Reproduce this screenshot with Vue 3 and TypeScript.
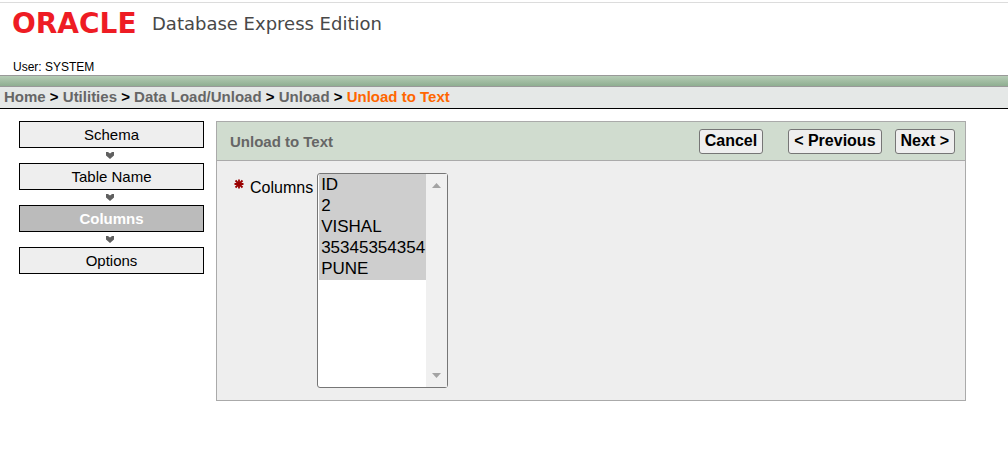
<script setup lang="ts">
import { ref } from 'vue'

const trail = ['Home', 'Utilities', 'Data Load/Unload', 'Unload']
const steps = ['Schema', 'Table Name', 'Columns', 'Options']
const current = 'Columns'
const columns = ['ID', '2', 'VISHAL', '35345354354', 'PUNE']
const selected = ref<string[]>([...columns])
</script>

<template>
  <div class="page">
    <header class="header">
      <div class="brand">
        <span class="logo">ORACLE</span>
        <span class="product">Database Express Edition</span>
      </div>
      <div class="user">User: SYSTEM</div>
    </header>
    <div class="band"></div>
    <nav class="crumbs" aria-label="Breadcrumb">
      <template v-for="item in trail" :key="item">
        <a href="#">{{ item }}</a>
        <span> &gt; </span>
      </template>
      <span class="here" aria-current="page">Unload to Text</span>
    </nav>

    <main class="main">
      <ol class="steps">
        <li v-for="(step, i) in steps" :key="step">
          <svg v-if="i > 0" class="arrow" width="8" height="7" viewBox="0 0 8 7" aria-hidden="true">
            <path d="M0 0h2l2 1.5L6 0h2v3.5L4 7 0 3.5z" fill="#606060" />
          </svg>
          <div class="step" :class="{ active: step === current }">{{ step }}</div>
        </li>
      </ol>

      <section class="panel">
        <div class="panel-head">
          <h1>Unload to Text</h1>
          <div class="actions">
            <button type="button" class="cancel">Cancel</button>
            <button type="button">&lt; Previous</button>
            <button type="button">Next &gt;</button>
          </div>
        </div>
        <div class="panel-body">
          <svg class="required" width="10" height="10" viewBox="0 0 10 10" aria-hidden="true">
            <path d="M5 0.5v9M0.5 5h9M1.5 1.5l7 7M8.5 1.5l-7 7" stroke="#990000" stroke-width="1.8" />
          </svg>
          <label for="columns">Columns</label>
          <div class="list">
            <select id="columns" v-model="selected" multiple>
              <option v-for="c in columns" :key="c" :value="c">{{ c }}</option>
            </select>
            <div class="scrollbar" aria-hidden="true">
              <svg width="9" height="5" viewBox="0 0 9 5"><path d="M4.5 0L9 5H0z" fill="#a3a3a3" /></svg>
              <svg width="9" height="5" viewBox="0 0 9 5"><path d="M0 0h9L4.5 5z" fill="#a3a3a3" /></svg>
            </div>
          </div>
        </div>
      </section>
    </main>
  </div>
</template>

<style>
body {
  margin: 0;
  background: #fff;
}
</style>

<style scoped>
.page {
  margin-top: 2px;
  border-top: 1px solid #dcdcdc;
  font-family: "Liberation Sans", Arial, sans-serif;
  color: #000;
}
.header {
  height: 72px;
  box-sizing: border-box;
  padding: 6px 12px 0;
}
.brand {
  display: flex;
  align-items: center;
  height: 30px;
}
.logo {
  width: 140px;
  font: bold 28px/30px "DejaVu Sans", sans-serif;
  color: #ee1c24;
}
.product {
  font: 18px/32px "DejaVu Sans", sans-serif;
  color: #484848;
}
.user {
  margin-top: 20px;
  font-size: 12px;
  line-height: 16px;
  padding-left: 1px;
}
.band {
  height: 10px;
  border-top: 1px solid #999;
  border-bottom: 1px solid #999;
  background: linear-gradient(#b5ccb5, #8fae91);
}
.crumbs {
  padding: 0 4px 2px;
  border-bottom: 1px solid #000;
  background: #e5e8e7;
  font-size: 15px;
  font-weight: bold;
  line-height: 19px;
}
.crumbs a {
  color: #666;
  text-decoration: none;
}
.crumbs .here {
  color: #ff6600;
}
.main {
  display: flex;
  align-items: flex-start;
  gap: 12px;
  padding: 12px 42px 0 19px;
}
.steps {
  flex: none;
  width: 185px;
  margin: 0;
  padding: 0;
  list-style: none;
}
.step {
  border: 1px solid #000;
  background: #eee;
  font-size: 15px;
  line-height: 25px;
  text-align: center;
}
.step.active {
  background: #bbb;
  color: #fff;
  font-weight: bold;
}
.arrow {
  display: block;
  margin: 0 auto;
  padding: 4px 3px 4px 0;
}
.panel {
  flex: 1;
  border: 1px solid #aaa;
  background: #eee;
}
.panel-head {
  display: flex;
  align-items: center;
  justify-content: space-between;
  height: 38px;
  padding: 0 10px 0 13px;
  border-bottom: 1px solid #aaa;
  background: #d0dccf;
}
h1 {
  margin: 0;
  padding-top: 2px;
  font-size: 15px;
  line-height: 20px;
  color: #666;
}
.actions {
  display: flex;
  gap: 13px;
}
button {
  height: 25px;
  padding: 0 5px 2px;
  border: 1px solid #767676;
  border-radius: 3px;
  background: #efefef;
  color: #000;
  font: bold 16px/21px "Liberation Sans", Arial, sans-serif;
}
.cancel {
  margin-right: 12px;
}
.panel-body {
  display: flex;
  align-items: flex-start;
  padding: 12px 17px;
}
.required {
  margin: 6px 6px 0 0;
}
label {
  font-size: 16px;
  line-height: 30px;
  margin-right: 4px;
}
.list {
  position: relative;
  width: 131px;
  height: 215px;
}
select {
  width: 100%;
  height: 100%;
  box-sizing: border-box;
  padding: 0 21px 0 1px;
  border: 1px solid #767676;
  border-radius: 3px;
  background: #fff;
  outline: none;
  overflow: hidden;
  font: 17px/21px "Liberation Sans", Arial, sans-serif;
}
option {
  min-height: 21px;
  padding: 0 2px;
  line-height: 21px;
  color: #000;
}
option:first-child {
  padding-top: 1px;
}
option:checked {
  background: linear-gradient(#cecece, #cecece);
  color: #000;
}
.scrollbar {
  position: absolute;
  top: 1px;
  right: 1px;
  bottom: 1px;
  width: 21px;
  box-sizing: border-box;
  padding: 9px 0;
  display: flex;
  flex-direction: column;
  align-items: center;
  justify-content: space-between;
  background: #f0f0f0;
}
</style>
